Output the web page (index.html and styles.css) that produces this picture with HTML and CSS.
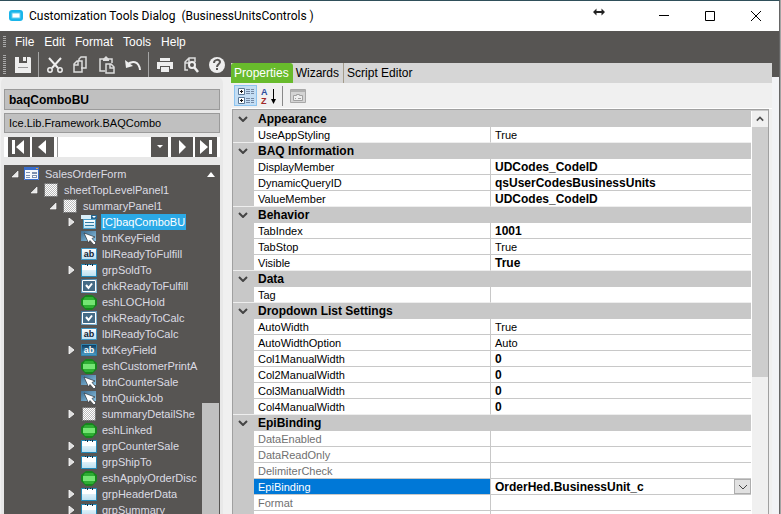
FILE: index.html
```html
<!DOCTYPE html>
<html lang="en">
<head>
<meta charset="utf-8">
<title>Customization Tools Dialog</title>
<link rel="stylesheet" href="styles.css">
</head>
<body>
<svg class="defs" aria-hidden="true">
  <defs>
    <linearGradient id="blue" x1="0" y1="0" x2="1" y2="1"><stop offset="0" stop-color="#3d6d92"/><stop offset="1" stop-color="#8cc4e4"/></linearGradient>
    <linearGradient id="pale" x1="0" y1="0" x2="0" y2="1"><stop offset="0" stop-color="#fff"/><stop offset="1" stop-color="#b9dff0"/></linearGradient>
    <linearGradient id="deep" x1="0" y1="0" x2="0" y2="1"><stop offset="0" stop-color="#0d3a5c"/><stop offset="1" stop-color="#4d9fc8"/></linearGradient>
    <pattern id="dots" width="2" height="2" patternUnits="userSpaceOnUse"><rect width="2" height="2" fill="#fff"/><rect width="1" height="1" fill="#bbb"/><rect x="1" y="1" width="1" height="1" fill="#bbb"/></pattern>
    <symbol id="form" viewBox="0 0 16 16"><path fill="#f4f7fb" d="M0 1h15v13H0z"/><path fill="#3a6ecb" d="M0 1h15v3H0z"/><path fill="#e8a33c" d="M12 2h2v1h-2z"/><path fill="none" stroke="#3a6ecb" d="M.5 1.500h14v12H.5z"/><path fill="#7b8fb0" d="M2 6h4v1H2zM2 9h4v1H2zM2 11h4v1H2zM8 6h5v2H8zM8 9h5v3H8z"/><path fill="#fff" d="M9 10h3v1H9z"/></symbol>
    <symbol id="panel" viewBox="0 0 16 16"><path fill="url(#dots)" d="M1 1h14v14H1z"/><path fill="none" stroke="#111" stroke-dasharray="1 1" d="M1.500 1.500h13v13h-13z"/></symbol>
    <symbol id="combo" viewBox="0 0 16 16"><path fill="#d9f0fa" d="M0 1h16v4H0z"/><path fill="#27678f" d="M10 1h6v4h-6z"/><path fill="#fff" d="M11 2h4l-2 2z"/><path fill="url(#pale)" stroke="#49a0cc" d="M2.500 5.500h12v9h-12z"/><path fill="#2f7ba5" d="M4 8h9v1H4zM4 11h9v1H4z"/></symbol>
    <symbol id="btn" viewBox="0 0 16 16"><path fill="url(#blue)" d="M0 1h15v10H0z"/><path fill="#fff" stroke="#26313a" stroke-width=".7" d="M3 3l11 4-3 1.500 4 4.500-2 2-4-4.500L7.500 13z"/></symbol>
    <symbol id="lbl" viewBox="0 0 16 16"><path fill="url(#pale)" stroke="#3c95c4" d="M.5 2.500h15v11H.5z"/><text x="8" y="11" class="ab ab-dark">ab</text></symbol>
    <symbol id="txt" viewBox="0 0 16 16"><path fill="url(#deep)" stroke="#2f83ae" d="M.5 2.500h15v11H.5z"/><text x="8" y="11" class="ab ab-light">ab</text></symbol>
    <symbol id="grp" viewBox="0 0 16 16"><path fill="url(#pale)" stroke="#2188b8" d="M.5 2.500h15v12H.5z"/><path fill="#fff" d="M1 3h14v5H1z"/><path fill="#183044" d="M4 2h1v1H4zM6 2h1v2H6zM9 2h1v1H9zM11 2h1v2h-1z"/></symbol>
    <symbol id="chk" viewBox="0 0 16 16"><path fill="url(#blue)" d="M0 1h16v14H0z"/><path fill="#456b86" stroke="#fff" d="M1.500 2.500h13v11h-13z"/><path fill="none" stroke="#fff" stroke-width="2" d="M5 7l2.500 3L11 5.500"/></symbol>
    <symbol id="ball" viewBox="0 0 16 16"><path fill="#16841d" d="M5 1h6l5 4v6l-5 5H5l-5-5V5z"/><path fill="#2fae34" d="M4 3h8l2 3v5l-2 3H4l-2-3V6z"/><path fill="#74e573" d="M2 6h12v5H2z"/></symbol>
    <symbol id="open" viewBox="0 0 8 8"><path fill="#e8e8e8" stroke="#fff" stroke-width=".6" d="M7 1v6H1z"/></symbol>
    <symbol id="closed" viewBox="0 0 8 8"><path fill="#ddd" stroke="#fff" stroke-width=".8" d="M1 0l5 4-5 4z"/></symbol>
    <symbol id="chev" viewBox="0 0 10 6"><path fill="none" stroke="#444" stroke-width="2" d="M1 1l4 4 4-4"/></symbol>
  </defs>
</svg>

<div class="window">
  <header class="titlebar">
    <svg class="logo" viewBox="0 0 14 12"><rect width="14" height="11" rx="3" fill="#19b5ea"/><rect x="3" y="3" width="8" height="5" fill="#fff" stroke="#64cdf0"/></svg>
    <h1>Customization Tools Dialog&nbsp; (BusinessUnitsControls )</h1>
    <svg class="resize" viewBox="0 0 12 8"><path fill="#222" d="M0 4l3.500-3.500V3h5V.5L12 4 8.500 7.500V5h-5v2.500z"/></svg>
    <div class="caption">
      <button aria-label="Minimize"><svg viewBox="0 0 10 10"><path stroke="#000" d="M0 4.500h10"/></svg></button>
      <button aria-label="Maximize"><svg viewBox="0 0 10 10"><path fill="none" stroke="#000" d="M.5.5h9v9h-9z"/></svg></button>
      <button aria-label="Close"><svg viewBox="0 0 10 10"><path stroke="#000" d="M0 0l10 10M10 0L0 10"/></svg></button>
    </div>
  </header>

  <nav class="menubar">
    <span class="grip"></span>
    <button>File</button><button>Edit</button><button>Format</button><button>Tools</button><button>Help</button>
  </nav>

  <div class="content">
    <section class="left">
      <div class="toolbar">
        <span class="grip"></span>
        <button aria-label="Save"><svg viewBox="0 0 18 18"><path fill="#eee" d="M1 1h4v6h8V1h3l1 1v15H1z"/><path fill="#eee" d="M9 1h3v4H9z"/><path fill="#999" d="M4 11h10v1H4z"/></svg></button>
        <i class="sep"></i>
        <button aria-label="Cut"><svg viewBox="0 0 18 18"><path fill="none" stroke="#eee" stroke-width="2" d="M3 2l9 10M15 2L6 12"/><circle cx="4" cy="14" r="2.200" fill="none" stroke="#eee" stroke-width="1.500"/><circle cx="14" cy="14" r="2.200" fill="none" stroke="#eee" stroke-width="1.500"/></svg></button>
        <button aria-label="Copy"><svg viewBox="0 0 18 18"><path fill="none" stroke="#ddd" stroke-width="1.500" d="M7 5V3l2-2h5v11H9M2 8l3-3h5v11H2zM2 9h4V5"/></svg></button>
        <button aria-label="Paste"><svg viewBox="0 0 18 18"><path fill="none" stroke="#ddd" stroke-width="1.500" d="M7 15H2V3h12v4M8 8h5l3 3v6H8zM12 8v4h4"/><path fill="#ddd" d="M5 3l3-3 3 3v2H5z"/></svg></button>
        <button aria-label="Undo"><svg viewBox="0 0 18 18"><path fill="none" stroke="#eee" stroke-width="2" d="M3 9c5-5 12-4 13 5"/><path fill="#eee" d="M1 4l1 8 7-2z"/></svg></button>
        <i class="sep"></i>
        <button aria-label="Print"><svg viewBox="0 0 18 18"><path fill="#eee" d="M4 2h10v3H4zM1 6h16v7h-3v-3H4v3H1z"/><path fill="#eee" d="M5 11h8v5H5z"/></svg></button>
        <button aria-label="Preview"><svg viewBox="0 0 18 18"><path fill="none" stroke="#ddd" stroke-width="1.500" d="M6 14H3V6l4-4h6v4M3 7h4V2"/><circle cx="10" cy="9" r="3" fill="none" stroke="#eee" stroke-width="2"/><path stroke="#eee" stroke-width="2.500" d="M12 11l4 5"/></svg></button>
        <button aria-label="Help"><svg viewBox="0 0 18 18"><circle cx="9" cy="9" r="8" fill="#eee"/><path fill="none" stroke="#575553" stroke-width="2" d="M6 7c0-4 6-4 6-1 0 2-3 2-3 5M9 12v2"/></svg></button>
      </div>

      <div class="side">
        <input class="name" value="baqComboBU" aria-label="Control name" readonly>
        <input class="type" value="Ice.Lib.Framework.BAQCombo" aria-label="Control type" readonly>
        <div class="pager">
          <button aria-label="First"><svg viewBox="0 0 22 20"><path fill="#fff" d="M4 3h3v14H4zM16 3v14l-8-7z"/></svg></button>
          <button aria-label="Previous"><svg viewBox="0 0 22 20"><path fill="#fff" d="M14 3v14l-8-7z"/></svg></button>
          <div class="picker">
            <select aria-label="Control"><option></option></select>
            <span class="drop"><svg viewBox="0 0 6 4"><path fill="#fff" d="M0 0h6L3 3z"/></svg></span>
          </div>
          <button aria-label="Next"><svg viewBox="0 0 22 20"><path fill="#fff" d="M8 3v14l7-7z"/></svg></button>
          <button aria-label="Last"><svg viewBox="0 0 22 20"><path fill="#fff" d="M5 3v14l8-7zM14 3h3v14h-3z"/></svg></button>
        </div>

        <div class="tree">
          <ul>
            <li><div class="node"><svg class="tw"><use href="#open"/></svg><svg class="ic"><use href="#form"/></svg><span>SalesOrderForm</span></div>
              <ul>
                <li><div class="node"><svg class="tw"><use href="#open"/></svg><svg class="ic"><use href="#panel"/></svg><span>sheetTopLevelPanel1</span></div>
                  <ul>
                    <li><div class="node"><svg class="tw"><use href="#open"/></svg><svg class="ic"><use href="#panel"/></svg><span>summaryPanel1</span></div>
                      <ul>
                        <li class="node"><svg class="tw"><use href="#closed"/></svg><svg class="ic"><use href="#combo"/></svg><span class="selected">[C]baqComboBU</span></li>
                        <li class="node"><svg class="tw"></svg><svg class="ic"><use href="#btn"/></svg><span>btnKeyField</span></li>
                        <li class="node"><svg class="tw"></svg><svg class="ic"><use href="#lbl"/></svg><span>lblReadyToFulfill</span></li>
                        <li class="node"><svg class="tw"><use href="#closed"/></svg><svg class="ic"><use href="#grp"/></svg><span>grpSoldTo</span></li>
                        <li class="node"><svg class="tw"></svg><svg class="ic"><use href="#chk"/></svg><span>chkReadyToFulfill</span></li>
                        <li class="node"><svg class="tw"></svg><svg class="ic"><use href="#ball"/></svg><span>eshLOCHold</span></li>
                        <li class="node"><svg class="tw"></svg><svg class="ic"><use href="#chk"/></svg><span>chkReadyToCalc</span></li>
                        <li class="node"><svg class="tw"></svg><svg class="ic"><use href="#lbl"/></svg><span>lblReadyToCalc</span></li>
                        <li class="node"><svg class="tw"><use href="#closed"/></svg><svg class="ic"><use href="#txt"/></svg><span>txtKeyField</span></li>
                        <li class="node"><svg class="tw"></svg><svg class="ic"><use href="#ball"/></svg><span>eshCustomerPrintA</span></li>
                        <li class="node"><svg class="tw"></svg><svg class="ic"><use href="#btn"/></svg><span>btnCounterSale</span></li>
                        <li class="node"><svg class="tw"></svg><svg class="ic"><use href="#btn"/></svg><span>btnQuickJob</span></li>
                        <li class="node"><svg class="tw"><use href="#closed"/></svg><svg class="ic"><use href="#panel"/></svg><span>summaryDetailShe</span></li>
                        <li class="node"><svg class="tw"></svg><svg class="ic"><use href="#ball"/></svg><span>eshLinked</span></li>
                        <li class="node"><svg class="tw"><use href="#closed"/></svg><svg class="ic"><use href="#grp"/></svg><span>grpCounterSale</span></li>
                        <li class="node"><svg class="tw"><use href="#closed"/></svg><svg class="ic"><use href="#grp"/></svg><span>grpShipTo</span></li>
                        <li class="node"><svg class="tw"></svg><svg class="ic"><use href="#ball"/></svg><span>eshApplyOrderDisc</span></li>
                        <li class="node"><svg class="tw"><use href="#closed"/></svg><svg class="ic"><use href="#grp"/></svg><span>grpHeaderData</span></li>
                        <li class="node"><svg class="tw"><use href="#closed"/></svg><svg class="ic"><use href="#grp"/></svg><span>grpSummary</span></li>
                      </ul>
                    </li>
                  </ul>
                </li>
              </ul>
            </li>
          </ul>
          <div class="treebar"><svg viewBox="0 0 8 5"><path fill="#fff" d="M4 0l4 5H0z"/></svg><i></i></div>
        </div>
      </div>
    </section>

    <section class="right">
      <div class="tabs">
        <button class="active">Properties</button><button>Wizards</button><button>Script Editor</button>
      </div>
      <div class="gridtools">
        <button class="on" aria-label="Categorized"><svg viewBox="0 0 18 18"><path fill="#fff" stroke="#5a7896" d="M1.500 1.500h6v6h-6zM1.500 10.500h6v6h-6z"/><path fill="#111" d="M3 4h3v1H3zM4 3h1v3H4zM3 13h3v1H3zM4 12h1v3H4z"/><path stroke="#7488a4" stroke-dasharray="4 1" d="M9 2.500h8M9 4.500h8M9 6.500h8M9 11.500h8M9 13.500h8M9 15.500h8"/></svg></button>
        <button aria-label="Alphabetical"><svg viewBox="0 0 18 18"><text x="1" y="8" class="az a">A</text><text x="1" y="17" class="az z">Z</text><path stroke="#000" d="M13.500 2v12"/><path fill="#000" d="M11 12h5l-2.500 5z"/></svg></button>
        <i class="sep"></i>
        <button aria-label="Property pages"><svg viewBox="0 0 18 18"><path fill="#d4d4d4" stroke="#a8a8a8" d="M1.500 2.500h15v13h-15z"/><path fill="#b0b0b0" d="M2 3h14v2H2z"/><path fill="#eee" stroke="#a0a0a0" d="M4.500 8.500h3v-1h3v1h3v5h-9z"/><path stroke="#a0a0a0" d="M6 11.500h1M9 11.500h3"/></svg></button>
      </div>
      <div class="grid">
        <table>
          <colgroup><col class="gutter"><col class="prop"><col></colgroup>
          <tbody>
            <tr class="cat"><td><svg><use href="#chev"/></svg></td><th colspan="2">Appearance</th></tr>
            <tr class="last"><td></td><td>UseAppStyling</td><td>True</td></tr>
            <tr class="cat"><td><svg><use href="#chev"/></svg></td><th colspan="2">BAQ Information</th></tr>
            <tr><td></td><td>DisplayMember</td><td class="b">UDCodes_CodeID</td></tr>
            <tr><td></td><td>DynamicQueryID</td><td class="b">qsUserCodesBusinessUnits</td></tr>
            <tr class="last"><td></td><td>ValueMember</td><td class="b">UDCodes_CodeID</td></tr>
            <tr class="cat"><td><svg><use href="#chev"/></svg></td><th colspan="2">Behavior</th></tr>
            <tr><td></td><td>TabIndex</td><td class="b">1001</td></tr>
            <tr><td></td><td>TabStop</td><td>True</td></tr>
            <tr class="last"><td></td><td>Visible</td><td class="b">True</td></tr>
            <tr class="cat"><td><svg><use href="#chev"/></svg></td><th colspan="2">Data</th></tr>
            <tr class="last"><td></td><td>Tag</td><td></td></tr>
            <tr class="cat"><td><svg><use href="#chev"/></svg></td><th colspan="2">Dropdown List Settings</th></tr>
            <tr><td></td><td>AutoWidth</td><td>True</td></tr>
            <tr><td></td><td>AutoWidthOption</td><td>Auto</td></tr>
            <tr><td></td><td>Col1ManualWidth</td><td class="b">0</td></tr>
            <tr><td></td><td>Col2ManualWidth</td><td class="b">0</td></tr>
            <tr><td></td><td>Col3ManualWidth</td><td class="b">0</td></tr>
            <tr class="last"><td></td><td>Col4ManualWidth</td><td class="b">0</td></tr>
            <tr class="cat"><td><svg><use href="#chev"/></svg></td><th colspan="2">EpiBinding</th></tr>
            <tr class="dim"><td></td><td>DataEnabled</td><td></td></tr>
            <tr class="dim"><td></td><td>DataReadOnly</td><td></td></tr>
            <tr class="dim"><td></td><td>DelimiterCheck</td><td></td></tr>
            <tr class="current"><td></td><td><label for="epi">EpiBinding</label></td><td class="b"><div class="edit"><input id="epi" value="OrderHed.BusinessUnit_c"><button aria-label="Open list"><svg viewBox="0 0 10 6"><path fill="none" stroke="#444" d="M1 1l4 4 4-4"/></svg></button></div></td></tr>
            <tr class="dim"><td></td><td>Format</td><td></td></tr>
            <tr class="dim"><td></td><td></td><td></td></tr>
          </tbody>
        </table>
        <div class="scroll"><button aria-label="Scroll up"><svg viewBox="0 0 10 6"><path fill="none" stroke="#505050" stroke-width="2" d="M1 5l4-4 4 4"/></svg></button><i></i></div>
      </div>
    </section>
  </div>
</div>
</body>
</html>
```

FILE: styles.css
```css
* { box-sizing: border-box; }
body {
  margin: 0;
  height: 100vh;
  overflow: hidden;
  background: #a4a4a4;
  font: 12px/16px "Liberation Sans", Arial, sans-serif;
  color: #000;
}
button, input, select {
  margin: 0;
  padding: 0;
  border: 0;
  border-radius: 0;
  background: none;
  font: inherit;
  color: inherit;
}
ul { list-style: none; margin: 0; padding: 0; }
svg { display: block; }
.defs { position: absolute; width: 0; height: 0; }

.window {
  display: flex;
  flex-direction: column;
  height: 100%;
  margin-right: 1px;
  border-top: 1px solid #2f4f5a;
  border-right: 1px solid #666;
  background: #f0f0f0;
}

/* title bar */
.titlebar {
  flex: none;
  display: flex;
  align-items: center;
  height: 30px;
  padding-left: 9px;
  background: #fff;
}
.logo { width: 14px; height: 12px; margin-right: 6px; }
.titlebar h1 {
  margin: 0;
  font: 12px/16px Roboto, "Noto Sans", sans-serif;
  white-space: nowrap;
}
.resize { width: 12px; height: 8px; margin: 0 36px 8px auto; }
.caption { display: flex; }
.caption button {
  display: grid;
  place-items: center;
  width: 46px;
  height: 28px;
}
.caption button svg { width: 10px; height: 10px; }

/* menu and toolbar */
.menubar {
  flex: none;
  display: flex;
  align-items: center;
  gap: 10px;
  height: 21px;
  padding-left: 3px;
  background: #575553;
  color: #fff;
}
.grip {
  width: 3px;
  height: 12px;
  background: repeating-linear-gradient(#aaa 0 1px, #575553 1px 2px);
}
.menubar .grip { margin-right: -1px; }
.toolbar {
  flex: none;
  display: flex;
  align-items: center;
  height: 25px;
  padding-left: 3px;
  background: #575553;
}
.toolbar .grip { height: 20px; margin-right: 4px; }
.toolbar button {
  display: grid;
  place-items: center;
  width: 26px;
}
.toolbar button svg { width: 18px; height: 18px; }
.sep { width: 1px; height: 25px; margin: 0 3px 0 2px; background: #a4a4a4; }

.content {
  flex: 1;
  min-height: 0;
  display: grid;
  grid-template-columns: 231px minmax(0, 1fr);
  grid-template-rows: minmax(0, 1fr);
  background: linear-gradient(#575553 25px, #f2f3f6 25px);
}
.left, .right { display: flex; flex-direction: column; min-height: 0; }
.left { background: #f0f0f0; }

/* side panel */
.side {
  flex: 1;
  min-height: 0;
  display: flex;
  flex-direction: column;
  margin: 0 8px 0 1px;
  padding: 12px 3px 0;
  border-radius: 6px 6px 0 0;
  background: #e8e8e8;
}
.name, .type {
  width: 100%;
  padding: 0 4px;
  border: 1px solid #9a9a9a;
  background: #c0c0c0;
}
.name { height: 21px; margin-bottom: 3px; font-weight: bold; }
.type { height: 20px; margin-bottom: 4px; font-size: 11px; }
.pager {
  display: flex;
  gap: 2px;
  height: 20px;
  margin-bottom: 8px;
  padding: 0 3px 0 4px;
  background: #fff;
}
.pager button { width: 22px; background: #575553; }
.pager button svg { width: 22px; height: 20px; }
.picker {
  position: relative;
  flex: 1;
  margin: 0 1px;
  border-left: 1px solid #999;
}
.picker select { width: 100%; height: 20px; appearance: none; background: #fff; }
.drop {
  position: absolute;
  top: 0;
  right: 0;
  bottom: 0;
  display: grid;
  place-items: center;
  width: 17px;
  background: #575553;
  pointer-events: none;
}
.drop svg { width: 6px; height: 4px; }

/* control tree */
.tree {
  flex: 1;
  min-height: 0;
  display: flex;
  overflow: hidden;
  background: #575553;
  color: #dcdce4;
  font-size: 11px;
}
.tree > ul { flex: 1; min-width: 0; overflow: hidden; padding: 1px 0 0 7px; }
.tree ul ul { padding-left: 19px; }
.node { display: flex; align-items: center; height: 16px; white-space: nowrap; }
.tw { flex: none; width: 8px; height: 8px; margin-right: 5px; }
.ic { flex: none; width: 16px; height: 16px; margin-right: 4px; }
.node span { padding: 0 1px; }
.selected { background: #2ba9e6; color: #fff; }
.ab { font: bold 9px "Liberation Sans", Arial, sans-serif; text-anchor: middle; }
.ab-dark { fill: #123; }
.ab-light { fill: #fff; }
.treebar {
  flex: none;
  display: flex;
  flex-direction: column;
  justify-content: space-between;
  align-items: center;
  width: 18px;
  padding: 7px 1px 0 0;
}
.treebar svg { width: 8px; height: 5px; }
.treebar i { width: 17px; height: 111px; background: #c0c0c0; }

/* property pane */
.right { margin: 11px 7px 0 0; background: #f0f0f0; }
.tabs { flex: none; display: flex; height: 20px; background: #d6d6d6; }
.tabs button { padding: 0 4px 0 3px; border-right: 1px solid #a49c8c; }
.tabs button:last-child { border: 0; }
.tabs .active { border: 0; border-radius: 3px 3px 0 0; background: #68bb2c; color: #fff; }
.gridtools {
  flex: none;
  display: flex;
  align-items: center;
  height: 26px;
  padding-left: 3px;
  border-bottom: 1px solid #fff;
}
.gridtools button {
  display: grid;
  place-items: center;
  width: 23px;
  height: 21px;
}
.gridtools button svg { width: 18px; height: 18px; }
.gridtools .on { border: 1px solid #8cc4f0; background: #c4def4; }
.gridtools .sep { height: 20px; background: #888; }
.az { font: bold 9px "Liberation Sans", Arial, sans-serif; }
.a { fill: #2b4c9c; }
.z { fill: #a02828; }

.grid {
  flex: 1;
  min-height: 0;
  display: flex;
  overflow: hidden;
  margin: 0 3px 0 1px;
  padding-top: 1px;
  border: 1px solid #a0a0a0;
  border-bottom: 0;
  background: #c8c8c8;
}
table {
  flex: 1;
  align-self: flex-start;
  min-width: 0;
  table-layout: fixed;
  border-spacing: 0;
  background: #fff;
  font-size: 11px;
  line-height: 13px;
}
.gutter { width: 21px; }
.prop { width: 236px; }
td, th {
  height: 16px;
  padding: 2px 4px 0;
  border-bottom: 1px solid #c8c8c8;
  text-align: left;
  white-space: nowrap;
  overflow: hidden;
}
td:first-child { padding: 0 5px; background: #c8c8c8; }
td:first-child svg { width: 10px; height: 6px; }
td:nth-child(3) { border-left: 1px solid #c8c8c8; }
.cat th { background: #c8c8c8; }
.last td { border-bottom-color: #eee; }
.b, .cat th { font-size: 12px; font-weight: bold; }
.dim { color: #707070; }
.current td:nth-child(2) { background: #0078d7; color: #fff; }
.current td:nth-child(3) { padding: 0 0 0 4px; }
.edit { display: flex; height: 15px; }
.edit input { flex: 1; min-width: 0; padding-top: 1px; }
.edit button {
  display: grid;
  place-items: center;
  width: 17px;
  border: 1px solid #adadad;
  background: #e1e1e1;
}
.edit button svg { width: 10px; height: 6px; }

.scroll {
  flex: none;
  width: 17px;
  border-left: 1px solid #fff;
  background: #f0f0f0;
}
.scroll button { display: grid; place-items: center; width: 100%; height: 16px; }
.scroll button svg { width: 8px; height: 6px; }
.scroll i { display: block; height: 250px; background: #cdcdcd; }
```
